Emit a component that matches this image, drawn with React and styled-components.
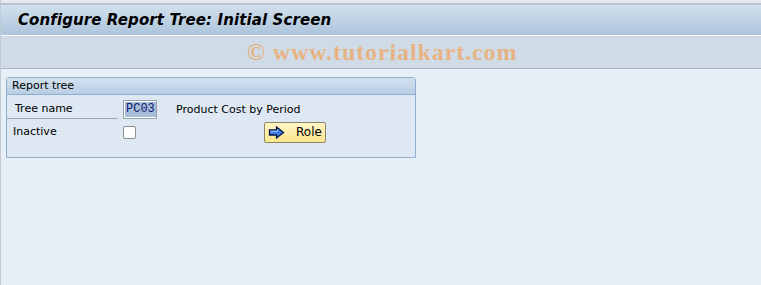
import React from 'react'
import styled, { createGlobalStyle } from 'styled-components'

const Global = createGlobalStyle`
  html, body { margin: 0; padding: 0; background: #e8eff7; }
  body { font-family: Tahoma, "DejaVu Sans", sans-serif; }
`

function ArrowIcon() {
  return (
    <svg width='17' height='13' viewBox='0 0 17 13'>
      <path d='M1.5 4 H8.5 V1 L15.5 6.5 L8.5 12 V9 H1.5 Z' fill='#3a7de4' stroke='#08154d' strokeWidth='1.3' />
      <path d='M2.5 5.2 H9.6 V3.3' fill='none' stroke='#a8d0ff' strokeWidth='1' />
    </svg>
  )
}

function App() {
  return (
    <Screen>
      <Global />
      <TopStrip />
      <TitleBar>
        <Title>Configure Report Tree: Initial Screen</Title>
      </TitleBar>
      <Toolbar>
        <Watermark>© www.tutorialkart.com</Watermark>
      </Toolbar>
      <Body>
        <Group>
          <GroupHead>Report tree</GroupHead>
          <GroupBody>
            <Row>
              <Label underline>Tree name</Label>
              <Field><Selected>PC03</Selected></Field>
              <Desc>Product Cost by Period</Desc>
            </Row>
            <Row>
              <Label>Inactive</Label>
              <Check />
              <RoleButton><ArrowIcon /><span>Role</span></RoleButton>
            </Row>
          </GroupBody>
        </Group>
      </Body>
    </Screen>
  )
}

export default App

const Screen = styled.div`
  width: 761px;
  height: 285px;
  display: flex;
  flex-direction: column;
  background: #e8eff7;
  border-left: 1px solid #c2cad4;
  box-sizing: border-box;
  overflow: hidden;
`

const TopStrip = styled.div`
  height: 3px;
  background: #e6e9ef;
  border-bottom: 2px solid #b9c3cf;
`

const TitleBar = styled.div`
  height: 30px;
  background: linear-gradient(#d2e0ec, #adc4dc);
  border-bottom: 1px solid #f4f8fc;
  display: flex;
  align-items: center;
  padding-left: 17px;
`

const Title = styled.div`
  font-family: "DejaVu Sans", sans-serif;
  font-weight: bold;
  font-style: italic;
  font-size: 15px;
  color: #000;
  letter-spacing: 0.1px;
`

const Toolbar = styled.div`
  height: 32px;
  background: #cfdce7;
  border-bottom: 1px solid #a7b5c6;
  display: flex;
  align-items: center;
  padding-left: 246px;
`

const Watermark = styled.div`
  font-family: "Liberation Serif", serif;
  font-weight: bold;
  font-size: 24px;
  color: #e7b383;
  letter-spacing: 0.9px;
`

const Body = styled.div`
  flex: 1;
  padding: 8px 0 0 5px;
`

const Group = styled.div`
  width: 408px;
  border: 1px solid #8fb0d2;
  border-radius: 3px 3px 0 0;
  background: #dde8f3;
`

const GroupHead = styled.div`
  height: 16px;
  line-height: 16px;
  padding-left: 5px;
  font-size: 11px;
  background: linear-gradient(#d3e1ef, #b9cee4);
  border-bottom: 1px solid #8fb0d2;
  color: #000;
`

const GroupBody = styled.div`
  height: 62px;
  padding-top: 4px;
  box-sizing: border-box;
  display: flex;
  flex-direction: column;
  gap: 3px;
`

const Row = styled.div`
  height: 20px;
  display: flex;
  align-items: center;
  font-size: 11px;
`

const Label = styled.div`
  width: 111px;
  padding-left: ${p => p.underline ? '8px' : '6px'};
  height: 20px;
  line-height: 20px;
  box-sizing: border-box;
  border-bottom: ${p => p.underline ? '1px solid #9ba6b3' : 'none'};
  margin-right: 5px;
`

const Field = styled.div`
  width: 34px;
  height: 19px;
  border: 1px solid #9aa3ad;
  background: #fff;
  display: flex;
  align-items: center;
  padding-left: 1px;
  box-sizing: border-box;
`

const Selected = styled.span`
  background: #a6bcd9;
  font-family: "Liberation Mono", monospace;
  font-size: 12px;
  color: #102070;
  line-height: 15px;
  padding: 0 1px;
`

const Desc = styled.div`
  margin-left: 19px;
`

const Check = styled.div`
  width: 11px;
  height: 11px;
  border: 1px solid #8a8f96;
  border-radius: 2px;
  background: #fff;
`

const RoleButton = styled.div`
  margin-left: 128px;
  width: 62px;
  height: 21px;
  box-sizing: border-box;
  border: 1px solid #8e8669;
  border-radius: 2px;
  background: linear-gradient(#fff6c6, #fbe58c);
  display: flex;
  align-items: center;
  padding-left: 3px;
  gap: 11px;
  font-size: 12px;
`
